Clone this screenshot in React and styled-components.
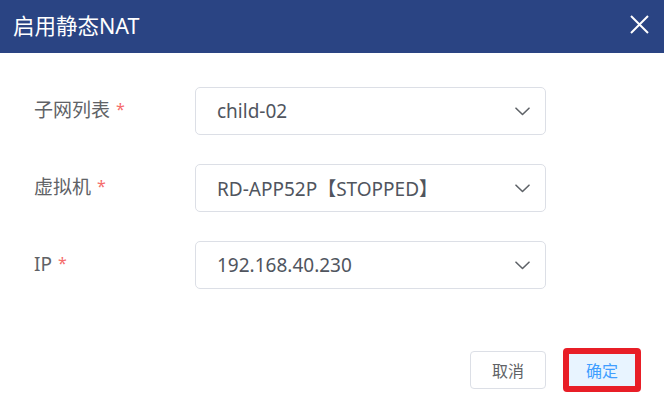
import React from "react";
import styled, { createGlobalStyle } from "styled-components";

const Global = createGlobalStyle`
  html, body { margin: 0; padding: 0; background: #ffffff; }
  body { font-family: "Noto Sans", "Noto Sans CJK SC", sans-serif; }
  * { box-sizing: border-box; }
`;

const Dialog = styled.div`
  width: 664px;
  height: 410px;
  background: #fff;
  display: flex;
  flex-direction: column;
`;

const Header = styled.div`
  height: 53px;
  background: #2a4483;
  display: flex;
  align-items: center;
  justify-content: space-between;
  padding: 0 15px 0 13px;
`;

const Title = styled.div`
  color: #fff;
  font-size: 21.5px;
  font-family: "Noto Sans", "Noto Sans CJK SC", sans-serif;
  line-height: 1;
  margin-top: -2px;
`;

const Close = styled.button`
  width: 19px;
  height: 19px;
  padding: 0;
  border: 0;
  background: transparent;
  display: flex;
  margin-top: -4px;
`;

const Form = styled.div`
  display: flex;
  flex-direction: column;
  gap: 29px;
  padding: 34px 0 0 34px;
`;

const Row = styled.div`
  display: flex;
  align-items: center;
  height: 48px;
`;

const Label = styled.div`
  width: 161px;
  font-size: 19px;
  color: #606266;
  line-height: 1;
  margin-top: -2px;
  display: flex;
  align-items: flex-start;
`;

const Star = styled.span`
  color: #f56c6c;
  margin-left: 6px;
  font-size: 16px;
  line-height: 1;
`;

const Select = styled.div`
  width: 351px;
  height: 48px;
  border: 1px solid #dcdfe6;
  border-radius: 5px;
  display: flex;
  align-items: center;
  justify-content: space-between;
  padding: 0 15px 0 21px;
  font-size: 19px;
  color: #50555e;
`;

const Footer = styled.div`
  display: flex;
  justify-content: flex-end;
  align-items: center;
  gap: 17px;
  padding: 59px 23px 0 0;
`;

const Button = styled.button`
  font-family: "Noto Sans", "Noto Sans CJK SC", sans-serif;
  font-size: 16px;
  border-radius: 4px;
  cursor: pointer;
  padding: 0;
  width: ${(p) => (p.$primary ? "78px" : "76px")};
  height: ${(p) => (p.$primary ? "44px" : "38px")};
  border: ${(p) => (p.$primary ? "6px solid #e81e27" : "1px solid #dcdfe6")};
  background: ${(p) => (p.$primary ? "#e8f4ff" : "#fff")};
  color: ${(p) => (p.$primary ? "#409eff" : "#606266")};
`;

const Chevron = () => (
  <svg width="15" height="9" viewBox="0 0 15 9" fill="none">
    <path d="M1 1.2 L7.5 7.5 L14 1.2" stroke="#5f6368" strokeWidth="1.6" strokeLinecap="round" strokeLinejoin="round" />
  </svg>
);

const fields = [
  { label: "子网列表", value: "child-02" },
  { label: "虚拟机", value: "RD-APP52P【STOPPED】" },
  { label: "IP", value: "192.168.40.230" },
];

export default function App() {
  return (
    <>
      <Global />
      <Dialog>
        <Header>
          <Title>启用静态NAT</Title>
          <Close aria-label="close">
            <svg width="19" height="19" viewBox="0 0 19 19">
              <path d="M1 1 L18 18 M18 1 L1 18" stroke="#fff" strokeWidth="2" />
            </svg>
          </Close>
        </Header>
        <Form>
          {fields.map((f) => (
            <Row key={f.label}>
              <Label>
                {f.label}
                <Star>*</Star>
              </Label>
              <Select>
                <span>{f.value}</span>
                <Chevron />
              </Select>
            </Row>
          ))}
        </Form>
        <Footer>
          <Button>取消</Button>
          <Button $primary>确定</Button>
        </Footer>
      </Dialog>
    </>
  );
}
